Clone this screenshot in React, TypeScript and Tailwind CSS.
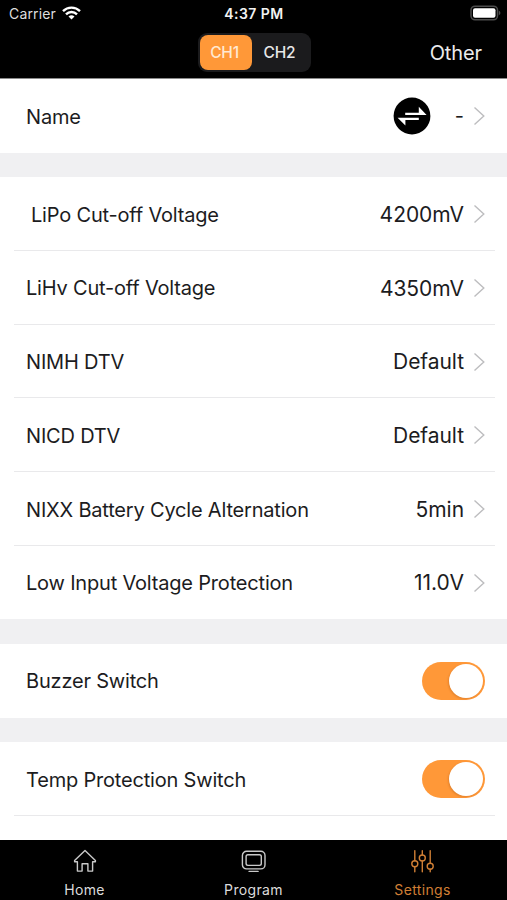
import type { ReactNode } from "react";

interface Setting {
  label: string;
  value: string;
  indent?: boolean;
}

const SETTINGS: Setting[] = [
  { label: "LiPo Cut-off Voltage", value: "4200mV", indent: true },
  { label: "LiHv Cut-off Voltage", value: "4350mV" },
  { label: "NIMH DTV", value: "Default" },
  { label: "NICD DTV", value: "Default" },
  { label: "NIXX Battery Cycle Alternation", value: "5min" },
  { label: "Low Input Voltage Protection", value: "11.0V" },
];

function Chevron() {
  return (
    <svg width="12" height="20" viewBox="0 0 12 20" fill="none" stroke="#bdbdbf" strokeWidth="1.4">
      <path d="M1.5 1.5 10.8 10 1.5 18.5" />
    </svg>
  );
}

function Row({ label, indent, divider, children }: { label: string; indent?: boolean; divider?: boolean; children: ReactNode }) {
  return (
    <div className="h-[73.7px] shrink-0 bg-white pr-3 pl-3.5">
      <div
        className={`flex h-full items-center justify-between border-b pt-[1.5px] pr-2.5 pl-3 ${
          divider ? "border-[#e9e9eb]" : "border-transparent"
        }`}
      >
        <span className={`pt-px text-[20px] tracking-[-0.19px] whitespace-nowrap ${indent ? "pl-[5px]" : ""}`}>{label}</span>
        <div className="flex items-center">{children}</div>
      </div>
    </div>
  );
}

function Switch() {
  return (
    <button type="button" role="switch" aria-checked="true" className="flex h-[38px] w-[63px] items-center justify-end rounded-full bg-[#ff9838] pr-0.5">
      <span className="size-[34px] rounded-full bg-white shadow-[-1px_1px_2px_rgba(120,50,0,0.2)]" />
    </button>
  );
}

function StatusBar() {
  return (
    <div className="grid h-7 grid-cols-3 items-center pr-1.5 pb-px pl-[9px] text-[14px]">
      <div className="flex items-center gap-1.5 text-[#dedede]">
        <span className="tracking-[0.15px]">Carrier</span>
        <svg className="-mt-px" width="19" height="14" viewBox="0 0 19 14" fill="none" stroke="#fff" strokeWidth="2.4">
          <path d="M1 5.1a12.2 12.2 0 0 1 17 0M4 8.3a7.8 7.8 0 0 1 11 0" />
          <path d="M9.5 13.6 6.5 10.6a4.3 4.3 0 0 1 6 0Z" fill="#fff" stroke="none" />
        </svg>
      </div>
      <span className="pr-0.5 text-center text-[14px] font-semibold tracking-[0.45px] text-[#f2f2f2]">4:37 PM</span>
      <svg className="-mt-px justify-self-end" width="31" height="16" viewBox="0 0 31 16">
        <rect x="1" y="1.2" width="26.5" height="13.6" rx="4" fill="none" stroke="#4c4c4c" strokeWidth="1.5" />
        <rect x="3" y="3.2" width="22.5" height="9.6" rx="2" fill="#fff" />
        <path d="M28.8 5.8c2.1.7 2.1 3.7 0 4.4z" fill="#4c4c4c" />
      </svg>
    </div>
  );
}

function TabItem({ label, active, children }: { label: string; active?: boolean; children: ReactNode }) {
  return (
    <div className={`flex flex-1 flex-col items-center pt-2 ${active ? "text-[#d07f35]" : "text-[#c9c9c9]"}`}>
      <svg width="26" height="26" viewBox="0 0 26 26" fill="none" stroke="currentColor" strokeWidth="1.4" strokeLinejoin="round" strokeLinecap="round">
        {children}
      </svg>
      <span className={`mt-[7px] text-[14px] leading-[18px] tracking-[0.35px] ${active ? "" : "text-[#dcdcdc]"}`}>{label}</span>
    </div>
  );
}

export default function App() {
  return (
    <div className="flex h-[900px] w-[507px] flex-col overflow-hidden bg-[#f0f0f2] font-[Inter,sans-serif] text-[#1c1c1e]">
      <header className="h-[79px] shrink-0 border-b border-[#8a8a8a] bg-black">
        <StatusBar />
        <div className="grid grid-cols-3 items-center pt-[5px] pr-[25px] pl-[26px]">
          <div />
          <div className="flex h-[39px] w-[113px] items-center justify-self-center rounded-[9px] bg-[#1b1b1d] p-0.5 text-[15.5px] font-medium tracking-[-0.2px] text-[#e8e8e8]">
            <span className="flex h-[35px] w-[52px] items-center justify-center rounded-lg bg-[#ff9838] pr-0.5 text-[#ffe9d2]">CH1</span>
            <span className="flex-1 pl-1.5 text-left indent-1.5">CH2</span>
          </div>
          <span className="justify-self-end text-[20px] tracking-[-0.1px] text-[#ececec]">Other</span>
        </div>
      </header>

      <main className="flex min-h-0 flex-1 flex-col gap-[24.5px] overflow-hidden">
        <section>
          <Row label="Name">
            <svg className="mr-[24px]" width="38" height="38" viewBox="0 0 38 38">
              <circle cx="19" cy="19" r="18.4" fill="#000" />
              <path d="M12.2 15.8h13.6V9.8l7.8 8.2H12.2ZM25.8 20.7v2.2H12.4v5.5L4.6 20.7Z" fill="#fff" />
            </svg>
            <span className="mr-[9px] text-[20px]">-</span>
            <Chevron />
          </Row>
        </section>

        <section>
          {SETTINGS.map((s, i) => (
            <Row key={s.label} label={s.label} indent={s.indent} divider={i < SETTINGS.length - 1}>
              <span className="mr-[9px] pt-px text-[21px] tracking-[-0.05px]">{s.value}</span>
              <Chevron />
            </Row>
          ))}
        </section>

        <section>
          <Row label="Buzzer Switch">
            <Switch />
          </Row>
        </section>

        <section className="flex-1 bg-white">
          <Row label="Temp Protection Switch" divider>
            <Switch />
          </Row>
        </section>
      </main>

      <nav className="flex h-[60px] shrink-0 bg-black">
        <TabItem label="Home">
          <path d="M13 2.6 2.6 12.4v1.4h2.8v9.3h4.7v-7.4h5.8v7.4h4.7v-9.3h2.8v-1.4Z" />
        </TabItem>
        <TabItem label="Program">
          <rect x="1.4" y="3.3" width="22.6" height="17.6" rx="4.2" />
          <rect x="5.1" y="6.8" width="15.2" height="10.6" rx="1.8" />
          <path d="M8.1 23.4h9" />
        </TabItem>
        <TabItem label="Settings" active>
          <path d="M4.8 2.6v10.1M4.8 18.7v5.1M12.3 2.6v4.4M12.3 13v10.8M20.2 2.6v12.7M20.2 21.3v2.5" />
          <circle cx="4.8" cy="15.7" r="3" />
          <circle cx="12.3" cy="10" r="3" />
          <circle cx="20.2" cy="18.3" r="3" />
        </TabItem>
      </nav>
    </div>
  );
}
